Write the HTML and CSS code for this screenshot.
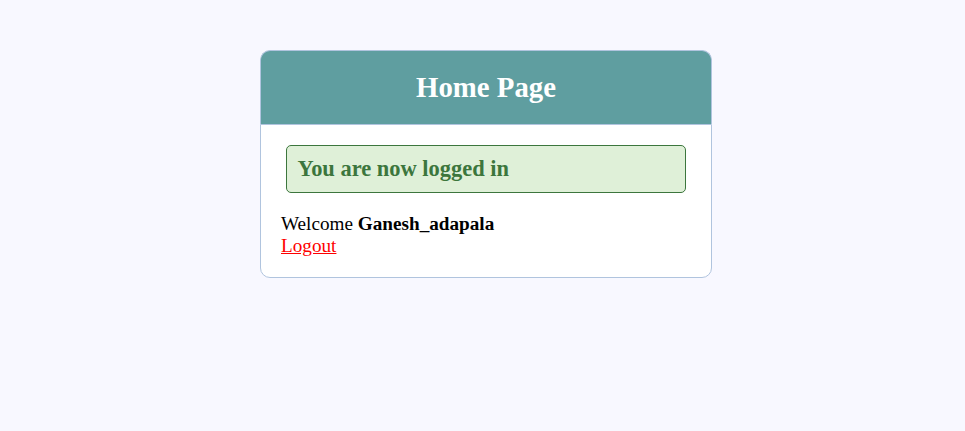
FILE: index.html
```html
<!DOCTYPE html>
<html>
<head>
<meta charset="utf-8">
<title>Home</title>
<link rel="stylesheet" href="styles.css">
</head>
<body>
<div class="header">
  <h2>Home Page</h2>
</div>
<div class="content">
  <div class="success">
    <h3>You are now logged in</h3>
  </div>
  <p>Welcome <strong>Ganesh_adapala</strong></p>
  <p><a href="#" class="logout">Logout</a></p>
</div>
</body>
</html>
```
FILE: styles.css
```css
* {
  margin: 0;
  padding: 0;
}
body {
  font-family: "Liberation Serif", "Times New Roman", serif;
  font-size: 120%;
  background: #F8F8FF;
  padding-left: 7px;
}
.header {
  width: 410px;
  margin: 50px auto 0;
  color: #fff;
  background: #5F9EA0;
  text-align: center;
  border: 1px solid #B0C4DE;
  border-bottom: none;
  border-radius: 10px 10px 0 0;
  padding: 20px;
}
.header h2 {
  font-size: 1.5em;
  line-height: 33px;
}
.content {
  width: 410px;
  margin: 0 auto;
  padding: 20px;
  border: 1px solid #B0C4DE;
  background: #fff;
  border-radius: 0 0 10px 10px;
  line-height: 22px;
}
.success {
  width: 92%;
  margin: 0 auto 20px;
  padding: 10px;
  color: #3c763d;
  background: #dff0d8;
  border: 1px solid #3c763d;
  border-radius: 5px;
  text-align: left;
}
.success h3 {
  font-size: 1.17em;
  line-height: 26px;
}
.logout {
  color: red;
}
```
